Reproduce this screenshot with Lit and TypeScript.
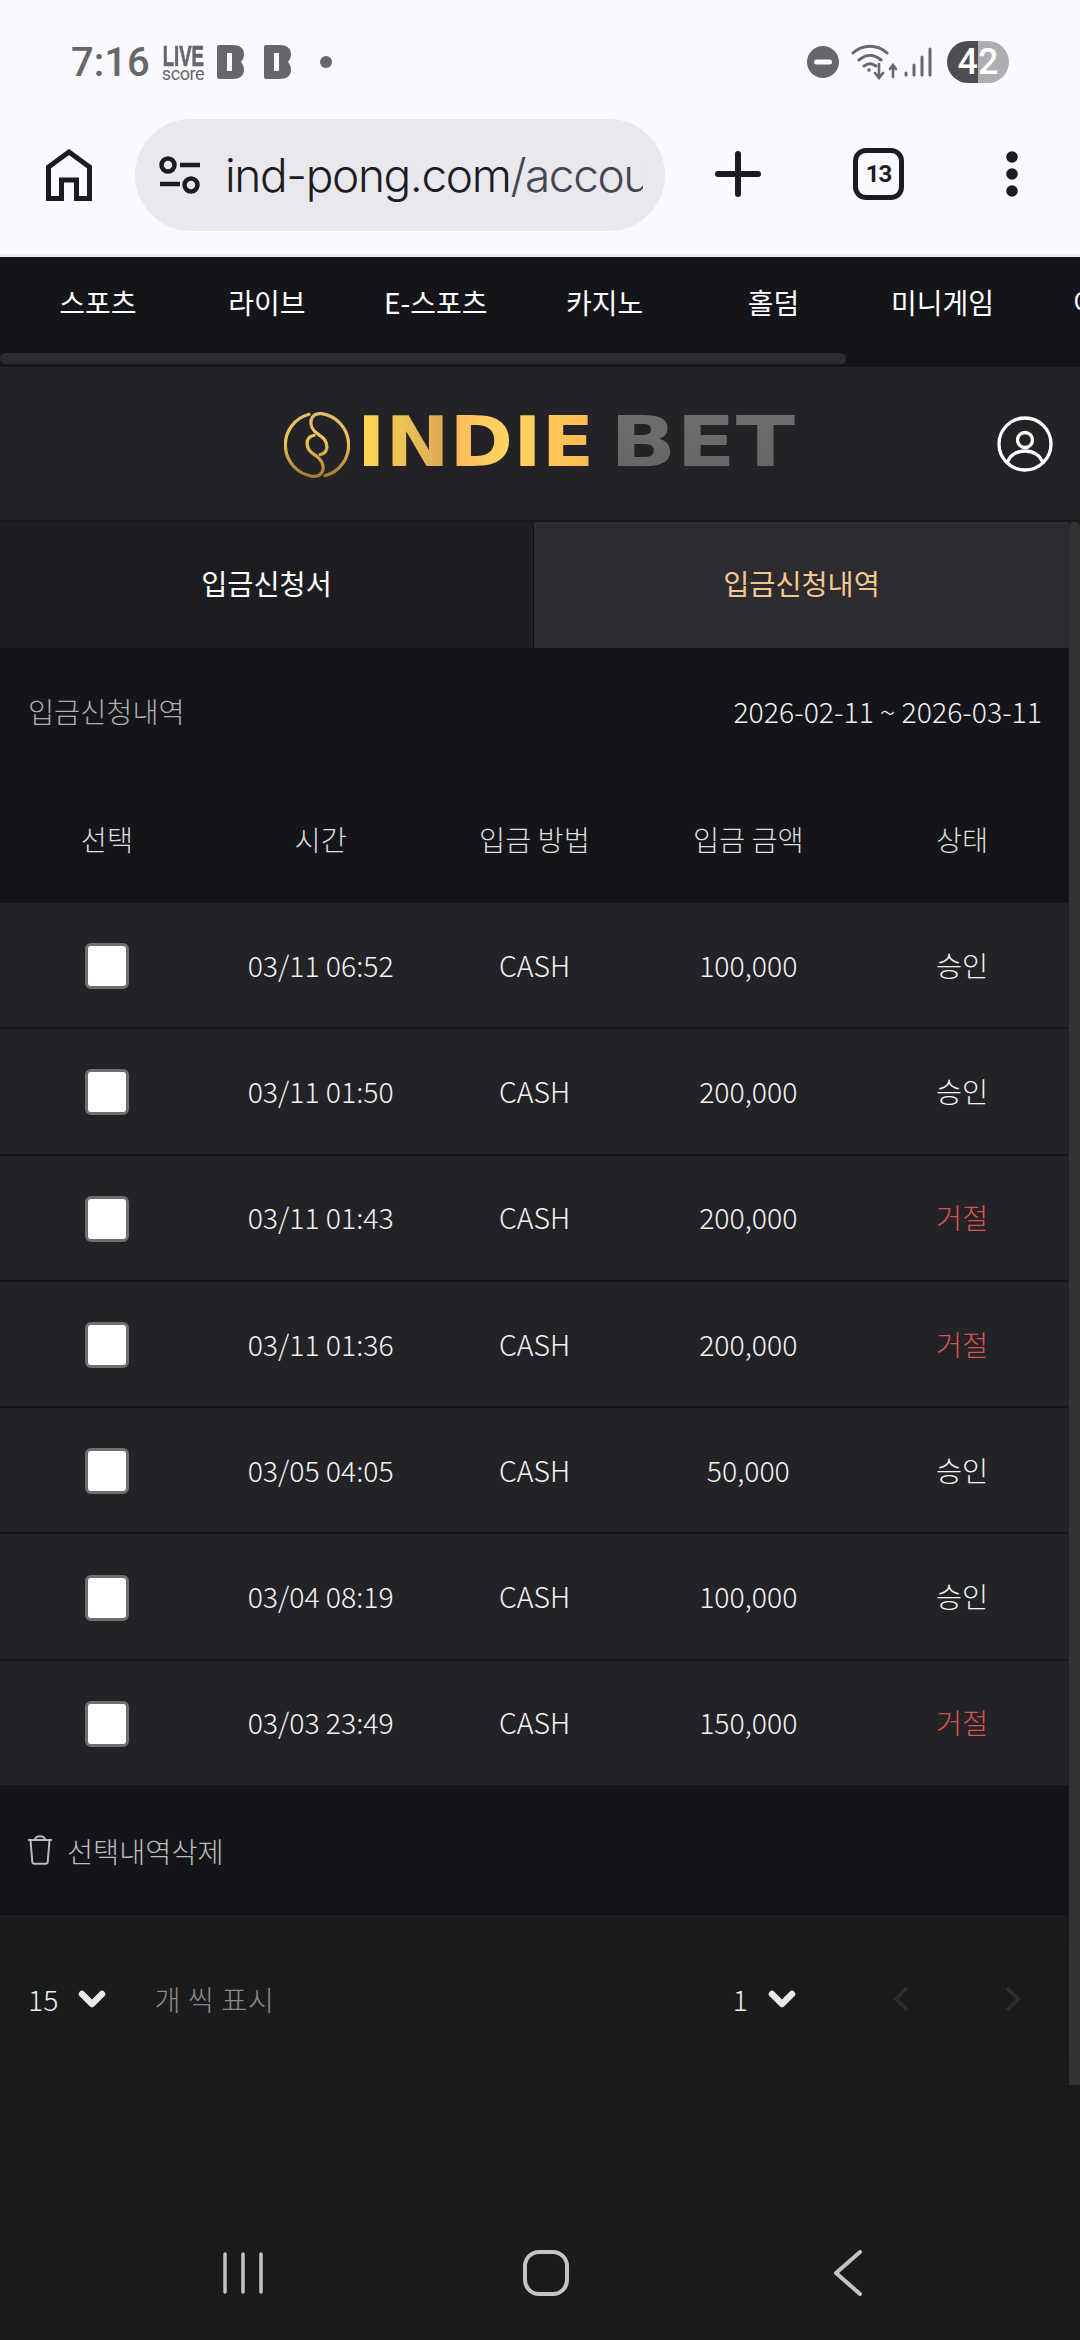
import { LitElement, html, css, svg } from 'lit';
import { customElement } from 'lit/decorators.js';

const NAV = ['스포츠', '라이브', 'E-스포츠', '카지노', '홀덤', '미니게임', '이벤트'];
const HEAD = ['선택', '시간', '입금 방법', '입금 금액', '상태'];
const ROWS = [
  ['03/11 06:52', '100,000', '승인'],
  ['03/11 01:50', '200,000', '승인'],
  ['03/11 01:43', '200,000', '거절'],
  ['03/11 01:36', '200,000', '거절'],
  ['03/05 04:05', '50,000', '승인'],
  ['03/04 08:19', '100,000', '승인'],
  ['03/03 23:49', '150,000', '거절'],
];

const chevron = svg`<svg class="chev" viewBox="0 0 28 20"><path d="M4 5l10 10L24 5" fill="none" stroke="#e8e8e8" stroke-width="6.500" stroke-linecap="round" stroke-linejoin="round"/></svg>`;

// notification icon of the betting app
const appIcon = svg`<svg class="badge" viewBox="0 0 27 34"><path fill="#67676b" fill-rule="evenodd" d="M0 2a2 2 0 0 1 2-2h14c6 0 11 3 11 9 0 4-1.500 6-3 8 1.500 2 3 4 3 8 0 6-5 9-11 9H2a2 2 0 0 1-2-2zM10 8h5v18h-5z"/></svg>`;

@customElement('app-root')
export class AppRoot extends LitElement {
  static styles = css`
    :host {
      display: block;
      width: 1080px;
      height: 2340px;
      overflow: hidden;
      position: relative;
      background: #1a1b1d;
      font-family: "Noto Sans CJK KR", "Noto Sans", sans-serif;
      font-weight: 300;
      color: #f0f0f0;
    }
    svg { display: block; flex: none; }

    .chrome { background: #f9f9ff; height: 254px; border-bottom: 3px solid #e8e8ee; box-sizing: content-box; }
    .status { height: 119px; display: flex; align-items: center; padding: 5px 0 0 71px; box-sizing: border-box; color: #67676b; }
    .time { font: 500 40px Roboto, sans-serif; flex: none; width: 92px; white-space: nowrap; }
    .live { display: flex; flex-direction: column; align-items: center; width: 40px; flex: none; line-height: 1; }
    .live b { font: 700 30px/23px "Liberation Sans", sans-serif; transform: scaleX(.62); -webkit-text-stroke: .7px #67676b; }
    .live span { font: 400 18px/14px Roboto, sans-serif; letter-spacing: -.4px; }
    .badge { width: 27px; height: 34px; margin-left: 14px; }
    .badge + .badge { margin-left: 20px; }
    .status-right { margin-left: auto; padding-right: 71px; display: flex; align-items: center; }
    .batt { position: relative; width: 62px; height: 42px; border-radius: 21px; margin-left: 14px; overflow: hidden; background: linear-gradient(90deg, #4e4e52 0 50%, #adadb2 50% 100%); color: #fff; font: 500 36px/42px Roboto, sans-serif; text-align: center; }

    .toolbar { height: 135px; display: flex; align-items: flex-start; padding-left: 46px; }
    .pill { width: 530px; height: 112px; margin-left: 43px; border-radius: 56px; background: #e8e8ee; display: flex; align-items: center; padding-left: 24px; box-sizing: border-box; overflow: hidden; flex: none; }
    .url { font: 300 46px/112px Inter, Roboto, sans-serif; letter-spacing: -1.4px; color: #1b1c21; margin-left: 24px; width: 418px; overflow: hidden; white-space: nowrap; }
    .url span { color: #44474f; }
    .plus { margin-left: 50px; margin-top: 32px; }
    .tabs-count { margin-left: 92px; margin-top: 29px; width: 51px; height: 52px; border: 5px solid #1b1c21; border-radius: 13px; box-sizing: border-box; color: #1b1c21; font: 700 24px/42px Roboto, sans-serif; letter-spacing: -1px; text-align: center; flex: none; }
    .more { margin-left: 102px; margin-top: 32px; }

    .nav { height: 110px; background: #131519; position: relative; overflow: hidden; display: flex; }
    .nav-item { flex: 0 0 168.9px; padding-left: 27px; box-sizing: border-box; text-align: center; font-size: 28px; line-height: 91px; font-weight: 400; color: #fff; white-space: nowrap; }
    .nav-thumb { position: absolute; left: 0; top: 96px; width: 846px; height: 11px; border-radius: 6px; background: #2b2c30; }

    .head { height: 155px; background: #232327; display: flex; align-items: center; justify-content: flex-end; padding-right: 27px; position: relative; box-sizing: border-box; border-bottom: 2px solid #18181b; }
    .logo { position: absolute; left: 284px; top: 45px; }
    .word { font: 700 69px/69px "DejaVu Sans", sans-serif; white-space: nowrap; display: inline-block; transform-origin: left center; -webkit-background-clip: text; background-clip: text; color: transparent; position: absolute; top: -4px; }
    .indie { background-image: linear-gradient(90deg, #ffdb55 0, #d8a656 40%, #fdbd5c 43%, #ffd561 62%, #fdb84f 100%); left: 73px; transform: scaleX(1.11); }
    .bet { background-image: linear-gradient(#6e6e6e, #666); left: 326px; transform: scaleX(1.26); }

    .tabs { display: flex; height: 126px; }
    .tab { flex: 0 0 534px; text-align: center; line-height: 122px; font-size: 28.4px; font-weight: 400; color: #fff; background: #1d1d21; border-right: 1px solid #111; box-sizing: border-box; }
    .tab.on { flex: 0 0 535px; background: #2b2b30; color: #f6c68f; border: 0; }

    .main { width: 1069px; }
    .title { height: 127px; background: #131519; display: flex; align-items: center; justify-content: space-between; padding: 0 27px 3px 28px; box-sizing: border-box; font-size: 28.4px; }
    .title .t { color: #aeaeb0; }
    .grid { display: grid; grid-template-columns: repeat(5, 213.8px); align-items: center; justify-items: center; }
    .thead { height: 128px; background: #131519; border-top: 2px solid #101114; padding-bottom: 3px; box-sizing: border-box; font-size: 28.4px; color: #dedede; }
    .row { height: 126.3px; background: #232327; border-bottom: 2px solid #17171a; padding-bottom: 2px; box-sizing: border-box; font-size: 28.4px; color: #f4f4f4; }
    .row:last-of-type { border-bottom: 0; }
    .check { width: 44px; height: 46px; margin-top: 4px; border-radius: 6px; background: #fff; border: 3px solid #6f6f6f; box-sizing: border-box; }
    .no { color: #d9534f; }

    .actions { height: 128px; background: #131519; border-bottom: 2px solid #111214; box-sizing: border-box; display: flex; align-items: center; padding-left: 27px; font-size: 28.4px; color: #bcbcbc; gap: 14px; }

    .pager { height: 112px; display: flex; align-items: center; padding-left: 28px; margin-top: 28px; font-size: 28.4px; }
    .pager > span { padding-bottom: 2px; }
    .chev { width: 28px; height: 20px; margin-left: 20px; flex: none; }
    .pager .hint { margin-left: 48px; color: #8b8b8b; letter-spacing: .5px; }
    .pager .page { margin-left: auto; }
    .pager .arrows { margin-left: 49px; display: flex; background: #1a1a1c; }
    .pager .arrow { width: 112px; height: 112px; display: flex; align-items: center; justify-content: center; }

    .rail { position: absolute; right: 0; top: 522px; width: 11px; height: 1563px; background: #333336; border-radius: 5px 5px 0 0; }

    .sysnav { position: absolute; left: 0; right: 0; bottom: 0; height: 140px; }
    .sysnav svg { position: absolute; }
  `;

  render() {
    return html`
      <div class="chrome">
        <div class="status">
          <span class="time">7:16</span>
          <div class="live"><b>LIVE</b><span>score</span></div>
          ${appIcon}${appIcon}
          <svg width="12" height="12" viewBox="0 0 12 12" style="margin-left:29px"><circle cx="6" cy="6" r="6" fill="#67676b"/></svg>
          <div class="status-right">
            <svg width="32" height="32" viewBox="0 0 32 32"><circle cx="16" cy="16" r="16" fill="#67676b"/><rect x="7" y="13.500" width="18" height="5" rx="2.500" fill="#f9f9ff"/></svg>
            <svg width="46" height="36" viewBox="0 0 46 36" style="margin-left:12px" fill="none" stroke="#67676b" stroke-width="3" stroke-linecap="round">
              <path d="M2 9C12 0 26 0 36 9M8 16c7-6 15-6 22 0M13 22c4-3 8-3 12 0"/>
              <circle cx="18" cy="26" r="1.800" fill="#67676b" stroke="none"/>
              <path d="M28 20v13M24 29l4 5 4-5M42 33V21M39 25l3-4 3 4" stroke-width="2.600"/>
            </svg>
            <svg width="30" height="30" viewBox="0 0 30 30" style="margin-left:6px" fill="none" stroke="#67676b" stroke-width="3" stroke-linecap="round">
              <path d="M3 26v2M11 18v10M19 10v18M27 2v26"/>
            </svg>
            <div class="batt">42</div>
          </div>
        </div>
        <div class="toolbar">
          <svg width="46" height="52" viewBox="0 0 46 52" style="margin-top:30px" fill="none" stroke="#1b1c21" stroke-width="5">
            <path d="M2.500 49.500V18L23 3l20.500 15v31.500H30.500V31h-15v18.500z"/>
          </svg>
          <div class="pill">
            <svg width="42" height="38" viewBox="0 0 42 38" fill="none" stroke="#1b1c21" stroke-width="4.500">
              <circle cx="9" cy="9" r="6.500"/><path d="M21 9h20M1 28h20"/><circle cx="32" cy="29" r="6.500"/>
            </svg>
            <div class="url">ind-pong.com<span>/account</span></div>
          </div>
          <svg class="plus" width="46" height="46" viewBox="0 0 46 46" stroke="#1b1c21" stroke-width="6" stroke-linecap="round"><path d="M3 23h40M23 3v40"/></svg>
          <div class="tabs-count">13</div>
          <svg class="more" width="12" height="46" viewBox="0 0 12 46" fill="#1b1c21"><circle cx="6" cy="6" r="5.800"/><circle cx="6" cy="23" r="5.800"/><circle cx="6" cy="40" r="5.800"/></svg>
        </div>
      </div>

      <div class="nav">
        ${NAV.map((n) => html`<div class="nav-item">${n}</div>`)}
        <div class="nav-thumb"></div>
      </div>

      <div class="head">
        <div class="logo">
          <svg width="66" height="66" viewBox="0 0 66 66" fill="none" stroke="url(#gold)" stroke-width="3.200" stroke-linecap="round">
            <defs><linearGradient id="gold" x1="0" y1="0" x2="0" y2="1"><stop offset="0" stop-color="#e2bc6a"/><stop offset=".45" stop-color="#f0c455"/><stop offset="1" stop-color="#a97c32"/></linearGradient></defs>
            <path d="M36 42.700C46 40.300 44.300 28.700 36 23.700C29.300 19.300 24.300 12.700 28.300 5.300C30.300 2 34.300 1.300 37.700 1.700A31.700 31.700 0 0 1 41 63.700"/>
            <path d="M30 23.300C20 25.700 21.700 37.300 30 42.300C36.700 46.700 41.700 53.300 37.700 60.700C35.700 64 31.700 64.700 28.300 64.300A31.700 31.700 0 0 1 25 2.300"/>
          </svg>
          <span class="word indie">INDIE</span>
          <span class="word bet">BET</span>
        </div>
        <svg width="56" height="56" viewBox="0 0 56 56" fill="none" stroke="#fff" stroke-width="3.300">
          <circle cx="28" cy="28" r="26"/>
          <circle cx="28" cy="24" r="7.500"/>
          <path d="M10 48c2-9 10-13 18-13s16 4 18 13"/>
        </svg>
      </div>

      <div class="tabs">
        <div class="tab">입금신청서</div>
        <div class="tab on">입금신청내역</div>
      </div>

      <div class="main">
        <div class="title"><span class="t">입금신청내역</span><span>2026-02-11 ~ 2026-03-11</span></div>
        <div class="grid thead">${HEAD.map((h) => html`<div>${h}</div>`)}</div>
        ${ROWS.map(
          (r) => html`<div class="grid row">
            <div class="check"></div>
            <div>${r[0]}</div>
            <div>CASH</div>
            <div>${r[1]}</div>
            <div class=${r[2] === '거절' ? 'no' : ''}>${r[2]}</div>
          </div>`,
        )}
        <div class="actions">
          <svg width="26" height="30" viewBox="0 0 26 30" fill="none" stroke="#bcbcbc" stroke-width="2">
            <path d="M1 5h24M3.500 5l1.800 22a2 2 0 0 0 2 1.800h11.400a2 2 0 0 0 2-1.800L22.500 5M8 5c0-5 10-5 10 0"/>
          </svg>
          <span>선택내역삭제</span>
        </div>
        <div class="pager">
          <span>15</span>${chevron}
          <span class="hint">개 씩 표시</span>
          <span class="page">1</span>${chevron}
          <div class="arrows">
            <div class="arrow"><svg width="16" height="26" viewBox="0 0 16 26" fill="none" stroke="#2e2e31" stroke-width="3.500"><path d="M14 2L3 13l11 11"/></svg></div>
            <div class="arrow"><svg width="16" height="26" viewBox="0 0 16 26" fill="none" stroke="#2e2e31" stroke-width="3.500"><path d="M2 2l11 11L2 24"/></svg></div>
          </div>
        </div>
      </div>
      <div class="rail"></div>

      <div class="sysnav">
        <svg style="left:223px;top:52px" width="42" height="42" viewBox="0 0 42 42" stroke="#c4c4c4" stroke-width="3.500" stroke-linecap="round"><path d="M2 2v38M20 2v38M38 2v38"/></svg>
        <svg style="left:522px;top:50px" width="48" height="46" viewBox="0 0 48 46" fill="none" stroke="#c4c4c4" stroke-width="4"><rect x="3" y="2" width="42" height="42" rx="14"/></svg>
        <svg style="left:831px;top:50px" width="32" height="46" viewBox="0 0 32 46" fill="none" stroke="#c4c4c4" stroke-width="4" stroke-linecap="round" stroke-linejoin="round"><path d="M29 2L5 23l24 21"/></svg>
      </div>
    `;
  }
}
